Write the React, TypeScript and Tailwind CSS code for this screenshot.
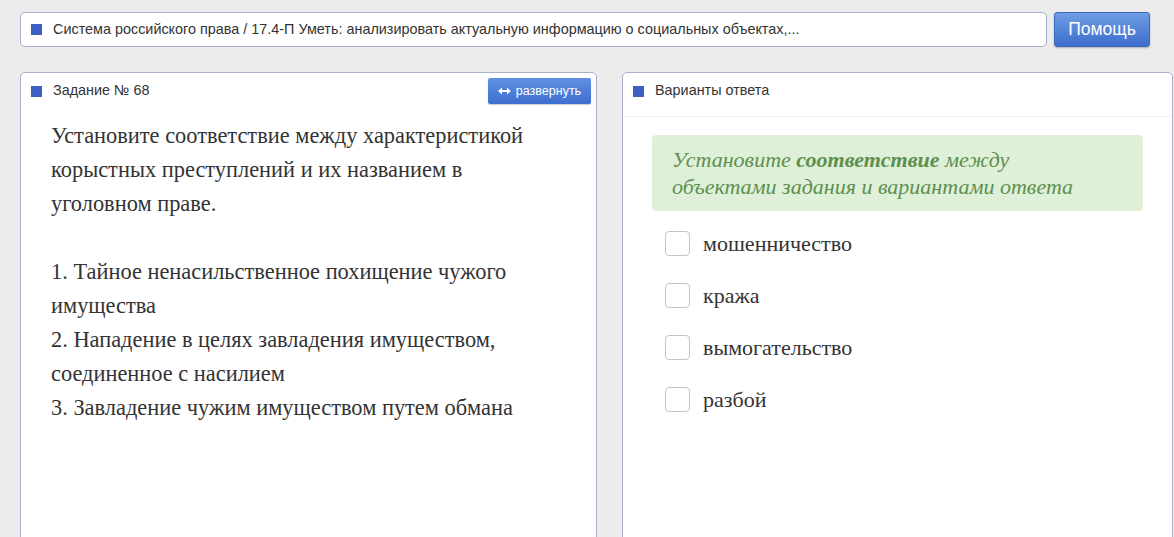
import { useState } from 'react'

const answers = ['мошенничество', 'кража', 'вымогательство', 'разбой']

function Marker() {
  return <span className="inline-block h-[11px] w-[11px] shrink-0 bg-[#3d5fc1]" />
}

export default function App() {
  const [checked, setChecked] = useState<number[]>([])

  function toggle(i: number) {
    setChecked(checked.includes(i) ? checked.filter((c) => c !== i) : [...checked, i])
  }

  return (
    <main className="h-[537px] overflow-hidden bg-[#ececec] font-['Liberation_Sans',Arial,sans-serif] text-[#333]">
      <div className="flex gap-[7px] pl-[20px] pt-[12px]">
        <div className="flex h-[35px] w-[1027px] items-center gap-[11px] rounded-[5px] border border-[#a9aecb] bg-white pl-[10px] text-[14.4px]">
          <Marker />
          <span>Система российского права / 17.4-П Уметь: анализировать актуальную информацию о социальных объектах,...</span>
        </div>
        <button className="h-[35px] w-[96px] rounded-[3px] border border-[#3f68c2] bg-gradient-to-b from-[#6f9de3] to-[#3e6ecd] text-[17.5px] text-white shadow-[0_1px_2px_rgba(0,0,0,0.25)]">
          Помощь
        </button>
      </div>

      <div className="mt-[25px] flex gap-[25px] pl-[20px]">
        <section className="h-[480px] w-[577px] shrink-0 rounded-[5px] border border-[#a9aecb] bg-white">
          <header className="flex h-[36px] items-center gap-[11px] pl-[10px] pr-[5px] text-[14.4px]">
            <Marker />
            <span>Задание № 68</span>
            <button className="ml-auto flex h-[26px] w-[103px] items-center justify-center gap-[5px] rounded-[2px] bg-gradient-to-b from-[#5f90e0] to-[#3f6fcf] text-[12.5px] text-white shadow-[0_1px_1px_rgba(0,0,0,0.2)]">
              <svg width="13" height="8" viewBox="0 0 13 8" fill="white">
                <path d="M0 4 L4 0.5 L4 3 L9 3 L9 0.5 L13 4 L9 7.5 L9 5 L4 5 L4 7.5 Z" />
              </svg>
              развернуть
            </button>
          </header>
          <div className="pl-[30px] pr-[40px] pt-[10px] font-['Liberation_Serif','Times_New_Roman',serif] text-[22.4px] leading-[34px] text-[#333]">
            <p>Установите соответствие между характеристикой корыстных преступлений и их названием в уголовном праве.</p>
            <p className="mt-[34px]">1. Тайное ненасильственное похищение чужого имущества</p>
            <p>2. Нападение в целях завладения имуществом, соединенное с насилием</p>
            <p>3. Завладение чужим имуществом путем обмана</p>
          </div>
        </section>

        <section className="h-[480px] w-[551px] shrink-0 rounded-[5px] border border-[#a9aecb] bg-white">
          <header className="flex h-[36px] items-center gap-[11px] pl-[10px] text-[14.4px]">
            <Marker />
            <span>Варианты ответа</span>
          </header>
          <div className="mt-[7px] border-t border-[#f2f2f2] px-[29px] pt-[18px] font-['Liberation_Serif','Times_New_Roman',serif]">
            <div className="rounded-[4px] bg-[#dff0d8] px-[20px] py-[11px]">
              <p className="max-w-[420px] text-[22px] italic leading-[27px] text-[#5d8f50]">
                Установите <b>соответствие</b> между объектами задания и вариантами ответа
              </p>
            </div>
            <div className="mt-[20px] flex flex-col gap-[27px] pl-[13px]">
              {answers.map((a, i) => (
                <label key={a} className="flex cursor-pointer items-center gap-[13px]" onClick={() => toggle(i)}>
                  <span className="flex h-[25px] w-[25px] items-center justify-center rounded-[4px] border border-[#c4c4c4] bg-white text-[14px]">
                    {checked.includes(i) ? '✓' : ''}
                  </span>
                  <span className="text-[22px] leading-[25px] text-[#333]">{a}</span>
                </label>
              ))}
            </div>
          </div>
        </section>
      </div>
    </main>
  )
}
